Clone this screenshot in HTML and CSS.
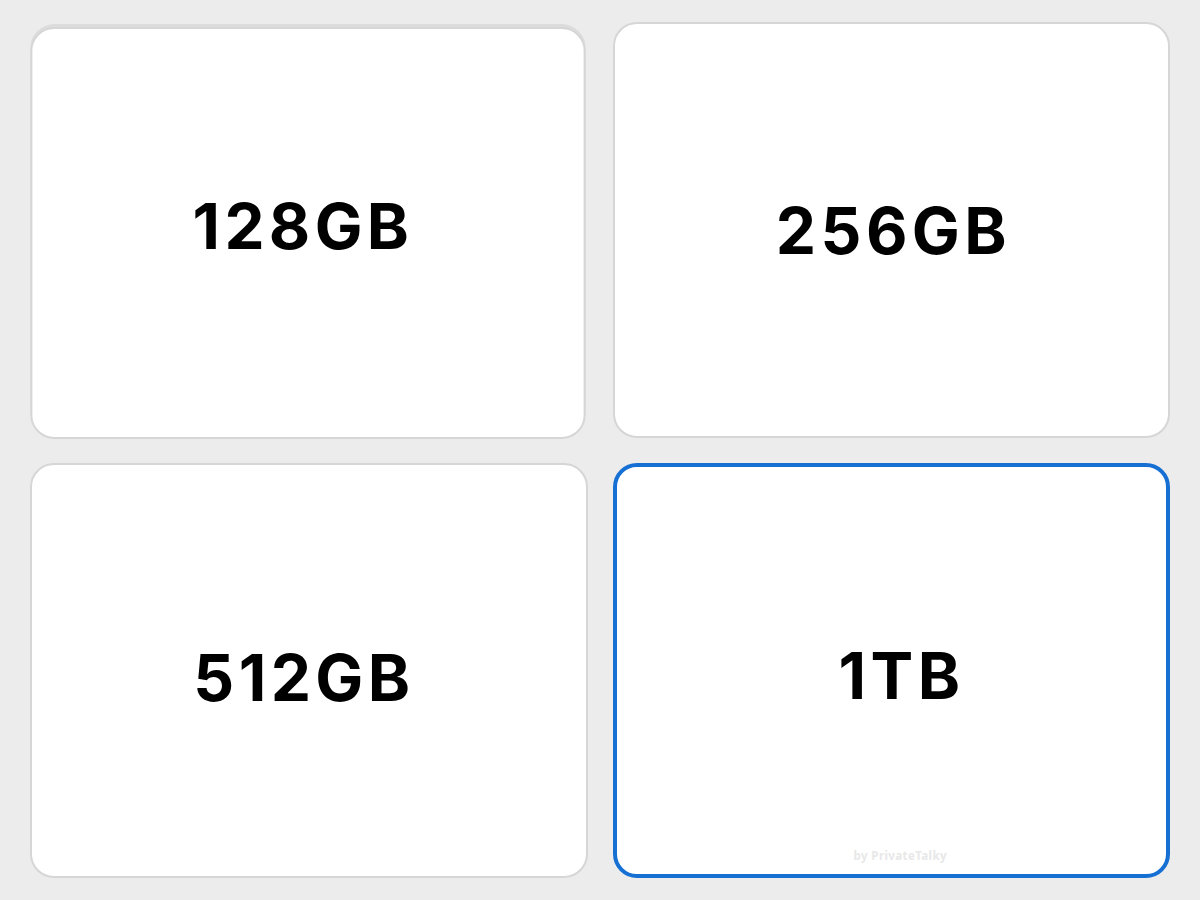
FILE: index.html
```html
<!DOCTYPE html>
<html lang="en">
<head>
    <meta charset="UTF-8">
    <meta name="viewport" content="width=device-width, initial-scale=1.0">
    <title>Storage Options</title>
    <link rel="stylesheet" href="styles.css">
</head>
<body>
    <div class="grid">
        <div class="option left pressed"><span class="size">128GB</span></div>
        <div class="option"><span class="size">256GB</span></div>
        <div class="option left lower"><span class="size">512GB</span></div>
        <div class="option selected">
            <span class="size">1TB</span>
            <span class="credit">by PrivateTalky</span>
        </div>
    </div>
</body>
</html>
```

FILE: styles.css
```css
/* Storage picker, 2x2 grid */
html, body {
    height: 100%;
}
body {
    margin: 0;
    background: #ececec;
    font-family: 'Inter', 'Liberation Sans', sans-serif;
    box-sizing: border-box;
    padding: 22px 30px 22px 30px;
}
.grid {
    height: 100%;
    display: grid;
    grid-template-columns: 1fr 1fr;
    grid-template-rows: 1fr 1fr;
    column-gap: 25px;
    row-gap: 25px;
}
.option {
    position: relative;
    background: #ffffff;
    border: 2px solid #d6d6d6;
    border-radius: 24px;
    display: flex;
    align-items: center;
    justify-content: center;
    padding-top: 2px;
}
.size {
    font-size: 64px;
    font-weight: 700;
    color: #000;
    letter-spacing: 4.4px;
    margin-right: -4.4px;
}
.left {
    padding-right: 14px;
}
.lower {
    padding-top: 14px;
}
/* card being tapped sinks a little */
.pressed {
    transform: translate(-1px, 3px) scale(0.995, 0.99);
    box-shadow: 0 -3px 0 #dcdcdc;
    padding-top: 0;
    padding-bottom: 14px;
}
.selected {
    border: 4px solid #1670d4;
    padding-top: 10px;
    padding-left: 16px;
}
.credit {
    position: absolute;
    bottom: 11px;
    left: 18px;
    right: 0;
    text-align: center;
    font-family: 'Noto Sans', sans-serif;
    font-size: 11.5px;
    font-weight: 700;
    letter-spacing: 0.4px;
    color: #e8e8e8;
}
```
